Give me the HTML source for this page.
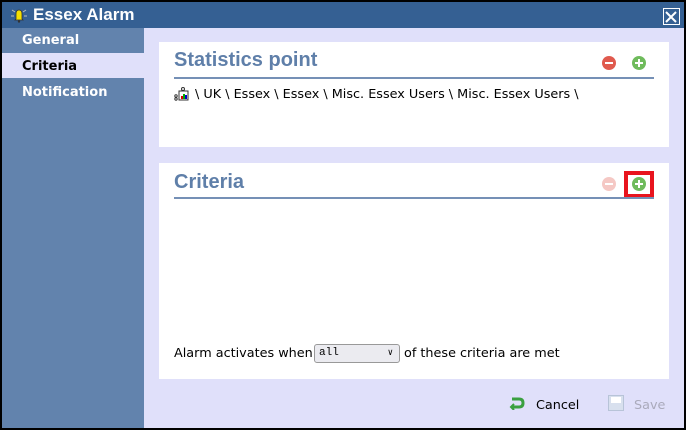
<!DOCTYPE html>
<html><head><style>
*{margin:0;padding:0;box-sizing:border-box}
body{width:686px;height:430px;background:#000;font-family:"DejaVu Sans","Liberation Sans",sans-serif;position:relative;overflow:hidden}
.win{position:absolute;left:2px;top:2px;width:682px;height:426px;background:#e0e0fa}
.title{position:absolute;left:0;top:0;width:682px;height:26px;background:#356093;color:#fff;font-weight:bold;font-size:17px;line-height:26px;padding-left:31px;font-family:"Liberation Sans",sans-serif}
.side{position:absolute;left:0;top:26px;width:142px;height:400px;background:#6283ad}
.it{position:absolute;left:0;width:142px;color:#fff;font-weight:bold;font-size:13px;padding-left:20px}
.panel{position:absolute;left:157px;width:510px;background:#fff}
.h{position:absolute;left:15px;font-weight:bold;font-size:20px;color:#5f7fa9;font-family:"Liberation Sans",sans-serif}
.line{position:absolute;left:15px;width:480px;height:2px;background:#7590b6}
.ic{position:absolute;width:14px;height:14px;border-radius:50%}
.ic:after{content:"";position:absolute;left:3px;top:6px;width:8px;height:2px;background:#fff}
.plus:before{content:"";position:absolute;left:6px;top:3px;width:2px;height:8px;background:#fff}
.t{position:absolute;font-size:12.8px;color:#000;white-space:nowrap}
</style></head><body>
<div class="win">
<div class="title">Essex Alarm</div>
<svg style="position:absolute;left:9px;top:5px" width="16" height="16"><g stroke="#bbb" stroke-width="1"><line x1="1" y1="3" x2="4" y2="5"/><line x1="15" y1="3" x2="12" y2="5"/><line x1="0" y1="9" x2="3" y2="9"/><line x1="16" y1="9" x2="13" y2="9"/></g><path d="M5 12 L5 7 Q5 3 8 3 Q11 3 11 7 L11 12 L12 13 L4 13 Z" fill="#f5e000" stroke="#333" stroke-width="0.8"/><circle cx="8" cy="14.5" r="1.2" fill="#333"/></svg>
<div style="position:absolute;left:661px;top:6px;width:17px;height:17px;border:1.5px solid #fff;"><svg width="14" height="14"><path d="M2 2L12 12M12 2L2 12" stroke="#fff" stroke-width="2"/></svg></div>
<div class="side">
<div class="it" style="top:0;height:24px;line-height:26px">General</div>
<div class="it" style="top:25px;height:25px;line-height:27px;background:#e0e0fa;color:#000">Criteria</div>
<div class="it" style="top:51px;height:25px;line-height:27px">Notification</div>
</div>
<div class="panel" style="top:40px;height:105px">
<div class="h" style="top:7px">Statistics point</div>
<div class="ic" style="left:443px;top:14px;background:#e05a4e"></div>
<div class="ic plus" style="left:473px;top:14px;background:#6fbb5c"></div>
<div class="line" style="top:35px"></div>
<svg style="position:absolute;left:15px;top:45px" width="16" height="14"><rect x="5" y="4" width="9" height="9" fill="#fff" stroke="#333"/><rect x="7" y="9" width="2" height="3" fill="#d00"/><rect x="9" y="7" width="2" height="5" fill="#0a0"/><rect x="11" y="8" width="2" height="4" fill="#00c"/><circle cx="9" cy="2" r="1.5" fill="none" stroke="#333"/><circle cx="2" cy="9" r="1.2" fill="none" stroke="#333"/><circle cx="2" cy="12" r="1.2" fill="none" stroke="#333"/></svg>
<div class="t" style="left:36px;top:45px">\ UK \ Essex \ Essex \ Misc. Essex Users \ Misc. Essex Users \</div>
</div>
<div class="panel" style="top:161px;height:216px">
<div class="h" style="top:8px">Criteria</div>
<div class="ic" style="left:443px;top:14px;background:#f5c8c4"></div>
<div style="position:absolute;left:465px;top:8px;width:30px;height:27px;border:4px solid #e8141e"></div>
<div class="ic plus" style="left:473px;top:14px;background:#6fbb5c"></div>
<div class="line" style="top:34px"></div>
<div class="t" style="left:15px;top:183px">Alarm activates when</div>
<div style="position:absolute;left:155px;top:181px;width:86px;height:19px;border:1px solid #999;border-radius:3px;background:#ebebf0;font-family:'Liberation Mono',monospace;font-size:11px;line-height:17px;padding-left:4px">all<span style="position:absolute;right:6px;top:0;font-size:9px">&#8744;</span></div>
<div class="t" style="left:245px;top:183px">of these criteria are met</div>
</div>
<svg style="position:absolute;left:507px;top:394px" width="16" height="14"><path d="M3 3 H10 Q14 3 14 7 Q14 11 10 11 H2" fill="none" stroke="#3aa040" stroke-width="3"/><path d="M5 8 L2 11 L5 14" fill="none" stroke="#3aa040" stroke-width="2"/></svg>
<div class="t" style="left:534px;top:396px">Cancel</div>
<div style="position:absolute;left:606px;top:393px;width:16px;height:16px;border:1px solid #b8c4d8;background:#d8e0ee"><div style="margin:1px 2px;height:6px;background:#fff"></div></div>
<div class="t" style="left:632px;top:396px;color:#aab">Save</div>
</div>
</body></html>
